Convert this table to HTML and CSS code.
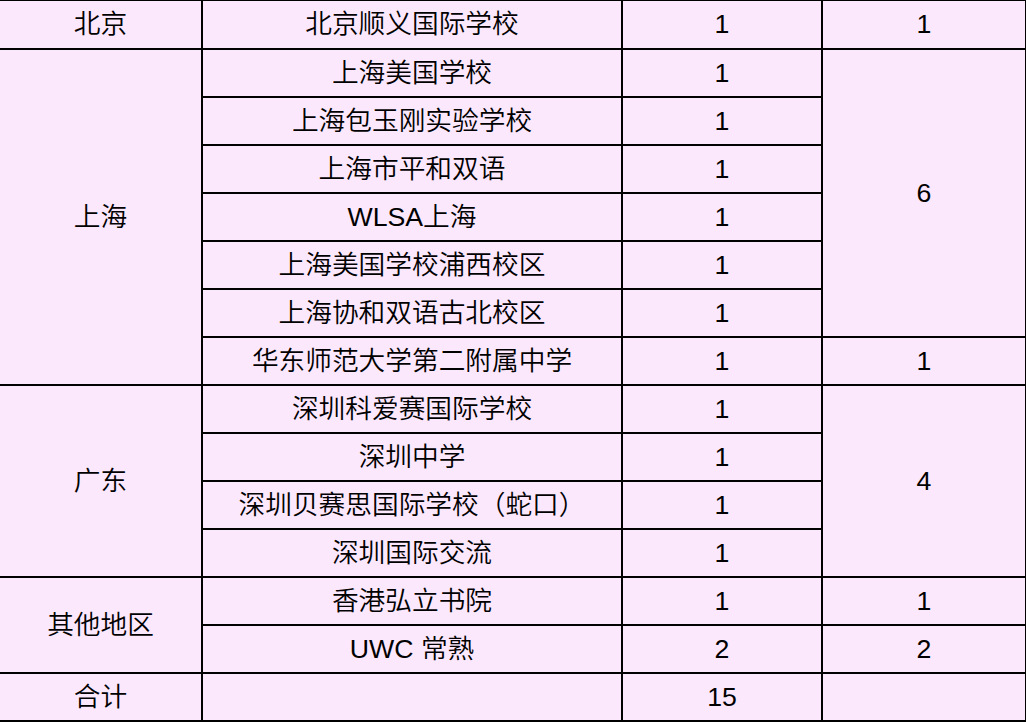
FILE: index.html
```html
<!DOCTYPE html>
<html lang="zh-CN">
<head>
<meta charset="utf-8">
<title>学校统计</title>
<link rel="stylesheet" href="styles.css">
</head>
<body>
<table class="stats">
  <colgroup>
    <col class="c-region">
    <col class="c-school">
    <col class="c-count">
    <col class="c-total">
  </colgroup>
  <tbody>
    <tr class="first">
      <td>北京</td>
      <td>北京顺义国际学校</td>
      <td>1</td>
      <td>1</td>
    </tr>
    <tr>
      <td rowspan="7">上海</td>
      <td>上海美国学校</td>
      <td>1</td>
      <td rowspan="6">6</td>
    </tr>
    <tr><td>上海包玉刚实验学校</td><td>1</td></tr>
    <tr><td>上海市平和双语</td><td>1</td></tr>
    <tr><td>WLSA上海</td><td>1</td></tr>
    <tr><td>上海美国学校浦西校区</td><td>1</td></tr>
    <tr><td>上海协和双语古北校区</td><td>1</td></tr>
    <tr><td>华东师范大学第二附属中学</td><td>1</td><td>1</td></tr>
    <tr>
      <td rowspan="4">广东</td>
      <td>深圳科爱赛国际学校</td>
      <td>1</td>
      <td rowspan="4">4</td>
    </tr>
    <tr><td>深圳中学</td><td>1</td></tr>
    <tr><td>深圳贝赛思国际学校（蛇口）</td><td>1</td></tr>
    <tr><td>深圳国际交流</td><td>1</td></tr>
    <tr>
      <td rowspan="2">其他地区</td>
      <td>香港弘立书院</td>
      <td>1</td>
      <td>1</td>
    </tr>
    <tr><td>UWC 常熟</td><td>2</td><td>2</td></tr>
    <tr><td>合计</td><td></td><td>15</td><td></td></tr>
  </tbody>
</table>
</body>
</html>
```

FILE: styles.css
```css
html, body {
  margin: 0;
  padding: 0;
  background: #fce8fc;
}

body {
  overflow: hidden;
}

.stats {
  border-collapse: collapse;
  table-layout: fixed;
  width: 1027px;
  margin: -1px 0 0 -2px;
  background: #fce8fc;
  font-family: "Liberation Sans", "Noto Sans CJK SC", sans-serif;
  font-size: 26.7px;
  font-weight: 350;
  color: #000;
}

.c-region { width: 203px; }
.c-school { width: 420px; }
.c-count  { width: 200px; }
.c-total  { width: 204px; }

.stats tr {
  height: 48px;
}

.stats tr.first {
  height: 49px;
}

.stats td {
  border: 2px solid #000;
  padding: 0;
  text-align: center;
  vertical-align: middle;
  line-height: 1;
  white-space: nowrap;
}
```
